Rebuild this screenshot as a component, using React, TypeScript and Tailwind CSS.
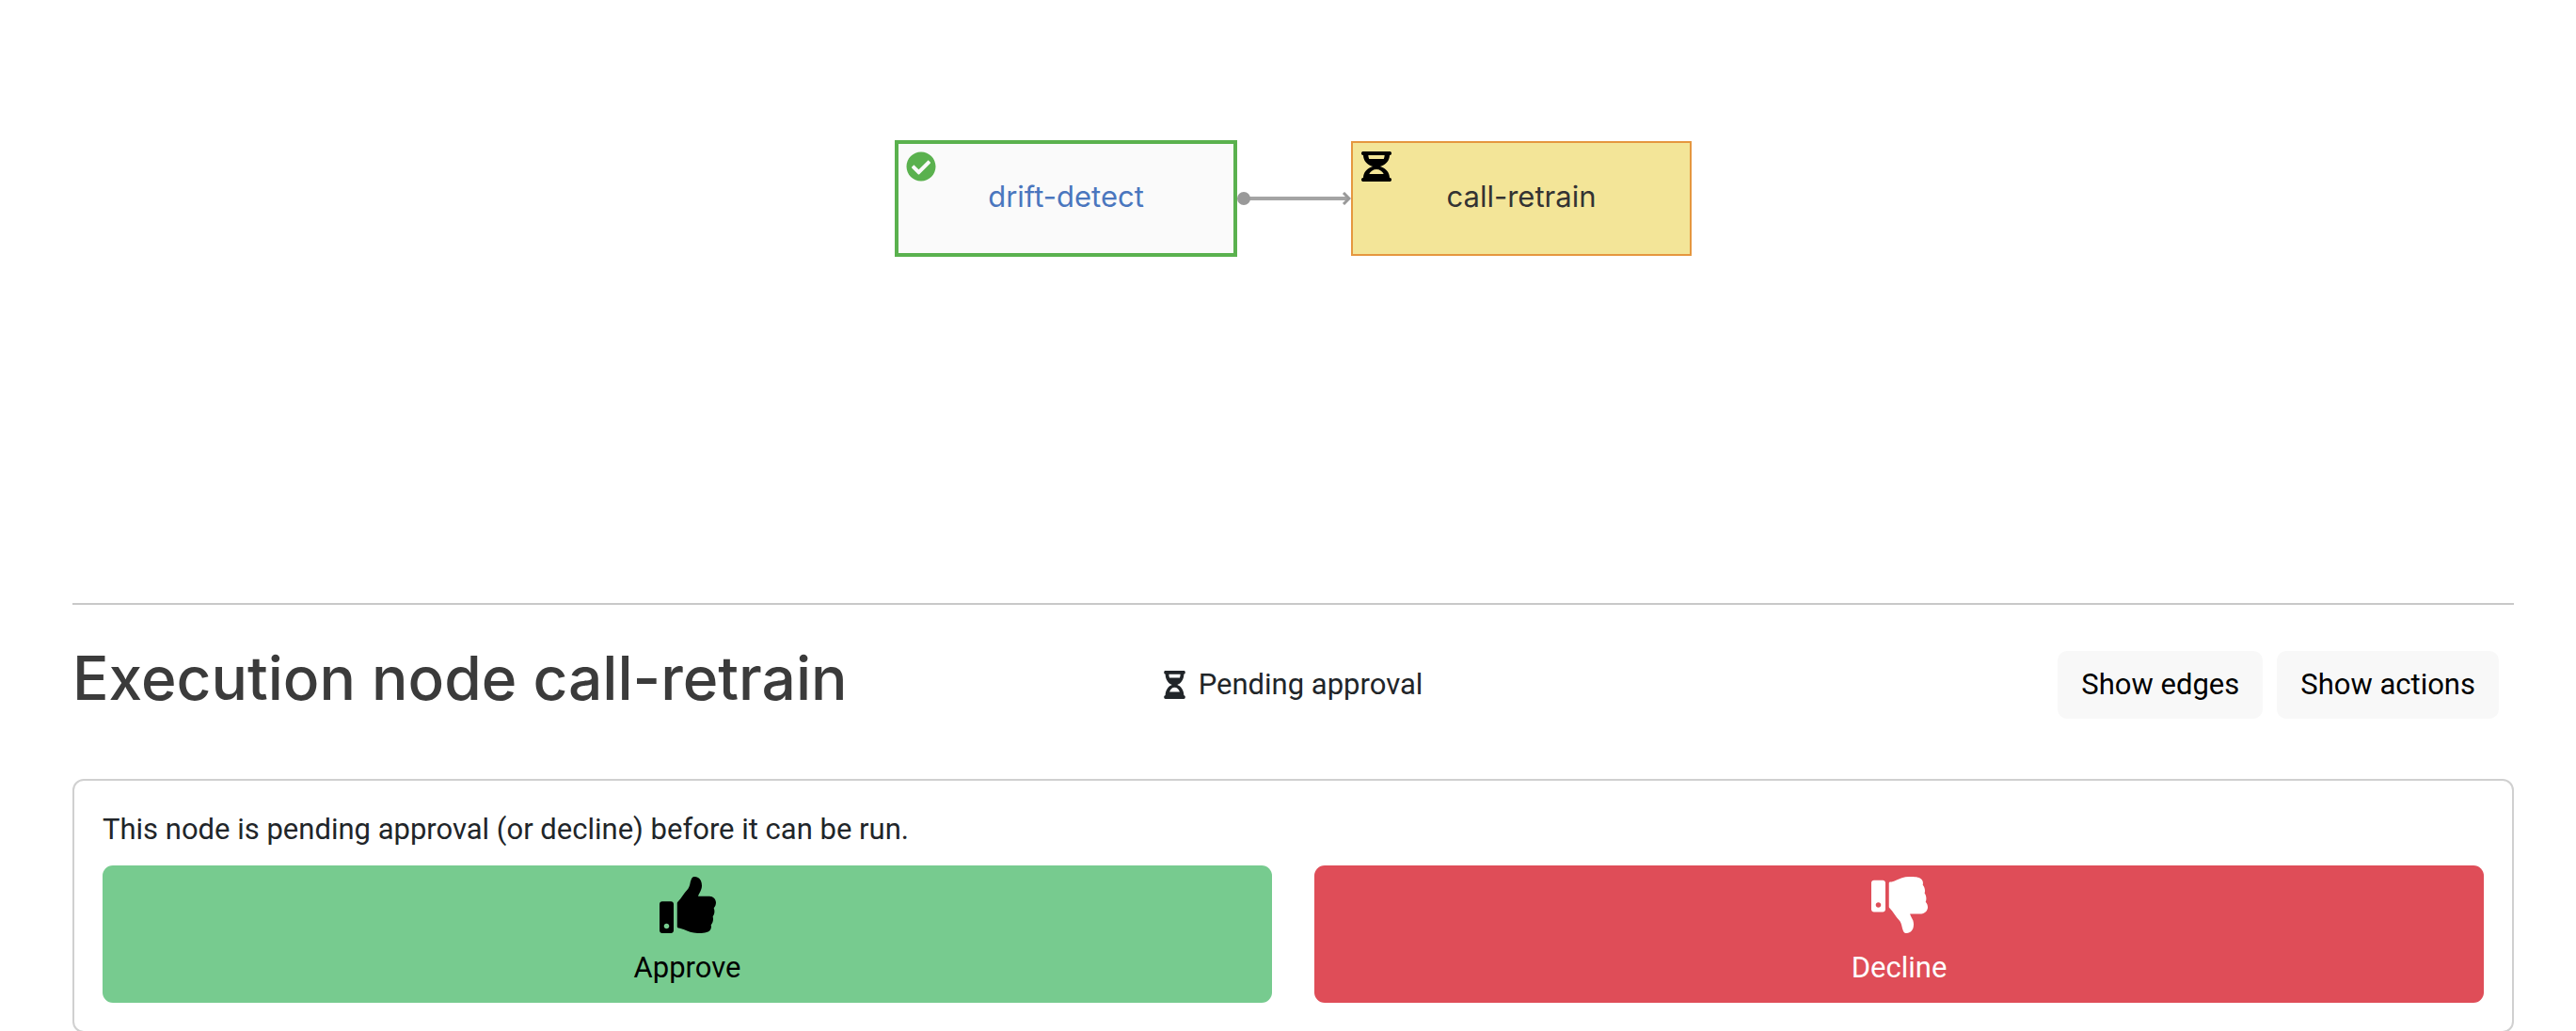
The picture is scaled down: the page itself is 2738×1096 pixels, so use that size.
import type { ReactNode } from "react";
import { FaCheckCircle, FaHourglassHalf, FaThumbsDown, FaThumbsUp } from "react-icons/fa";

function Connector() {
  return (
    <svg className="mt-[55px] h-[14px] w-[121px]" viewBox="0 0 121 14" fill="none" aria-hidden="true">
      <path d="M7 7H117" stroke="#a4a4a4" strokeWidth="4" />
      <circle cx="7" cy="7" r="7" fill="#999999" />
      <path d="M113 1L119 7L113 13" stroke="#999999" strokeWidth="3" />
    </svg>
  );
}

function ToolButton({ children }: { children: ReactNode }) {
  return (
    <button type="button" className="h-[72px] cursor-pointer rounded-[10px] bg-[#f8f8f8] px-[25px] text-[31px] text-black">
      {children}
    </button>
  );
}

export default function App() {
  return (
    <main className="h-screen overflow-hidden bg-white pr-[66px] pl-[77px] font-['Roboto',sans-serif] text-[31px] leading-[46px] text-[#212529]">
      <section
        aria-label="Execution graph"
        className="flex h-[643px] items-start justify-center border-b-2 border-[#c8c8c8] pt-[149px] font-['Inter',sans-serif]"
      >
        <div className="relative flex h-[124px] w-[364px] items-center justify-center border-4 border-[#5ab14e] bg-[#fafafa] pb-1">
          <FaCheckCircle className="absolute top-2 left-2 size-8 text-[#5ab14e]" />
          <a href="#drift-detect" className="text-[#4a76be]">
            drift-detect
          </a>
        </div>
        <Connector />
        <div className="relative mt-px flex h-[122px] w-[362px] items-center justify-center border-2 border-[#e5973f] bg-[#f3e598] pb-1 text-[#333333]">
          <FaHourglassHalf preserveAspectRatio="none" className="absolute top-[9px] left-[9px] size-8 text-black" />
          call-retrain
        </div>
      </section>

      <header className="mt-[42px] grid grid-cols-[1fr_auto_1fr] items-center">
        <h1 className="pb-[14px] font-['Inter',sans-serif] text-[64px] leading-[72px] font-medium whitespace-nowrap text-[#3b3b3b]">
          Execution node call-retrain
        </h1>
        <p className="flex items-center gap-[14px] whitespace-nowrap">
          <FaHourglassHalf className="h-[30px] w-[23px]" />
          Pending approval
        </p>
        <div className="flex justify-end gap-[15px] pr-4">
          <ToolButton>Show edges</ToolButton>
          <ToolButton>Show actions</ToolButton>
        </div>
      </header>

      <section className="mt-[57px] rounded-[12px] border-2 border-[#d0d0d0] px-[30px] pt-[29px] pb-[30px]">
        <p>This node is pending approval (or decline) before it can be run.</p>
        <div className="mt-[15px] grid grid-cols-2 gap-[45px]">
          <button
            type="button"
            className="flex cursor-pointer flex-col items-center gap-[14px] rounded-[11px] bg-[#77cb8f] pt-3 pb-[14px] text-black"
          >
            <FaThumbsUp className="size-[60px]" />
            Approve
          </button>
          <button
            type="button"
            className="flex cursor-pointer flex-col items-center gap-[14px] rounded-[11px] bg-[#df4d58] pt-3 pb-[14px] text-white"
          >
            <FaThumbsDown className="size-[60px]" />
            Decline
          </button>
        </div>
      </section>
    </main>
  );
}
